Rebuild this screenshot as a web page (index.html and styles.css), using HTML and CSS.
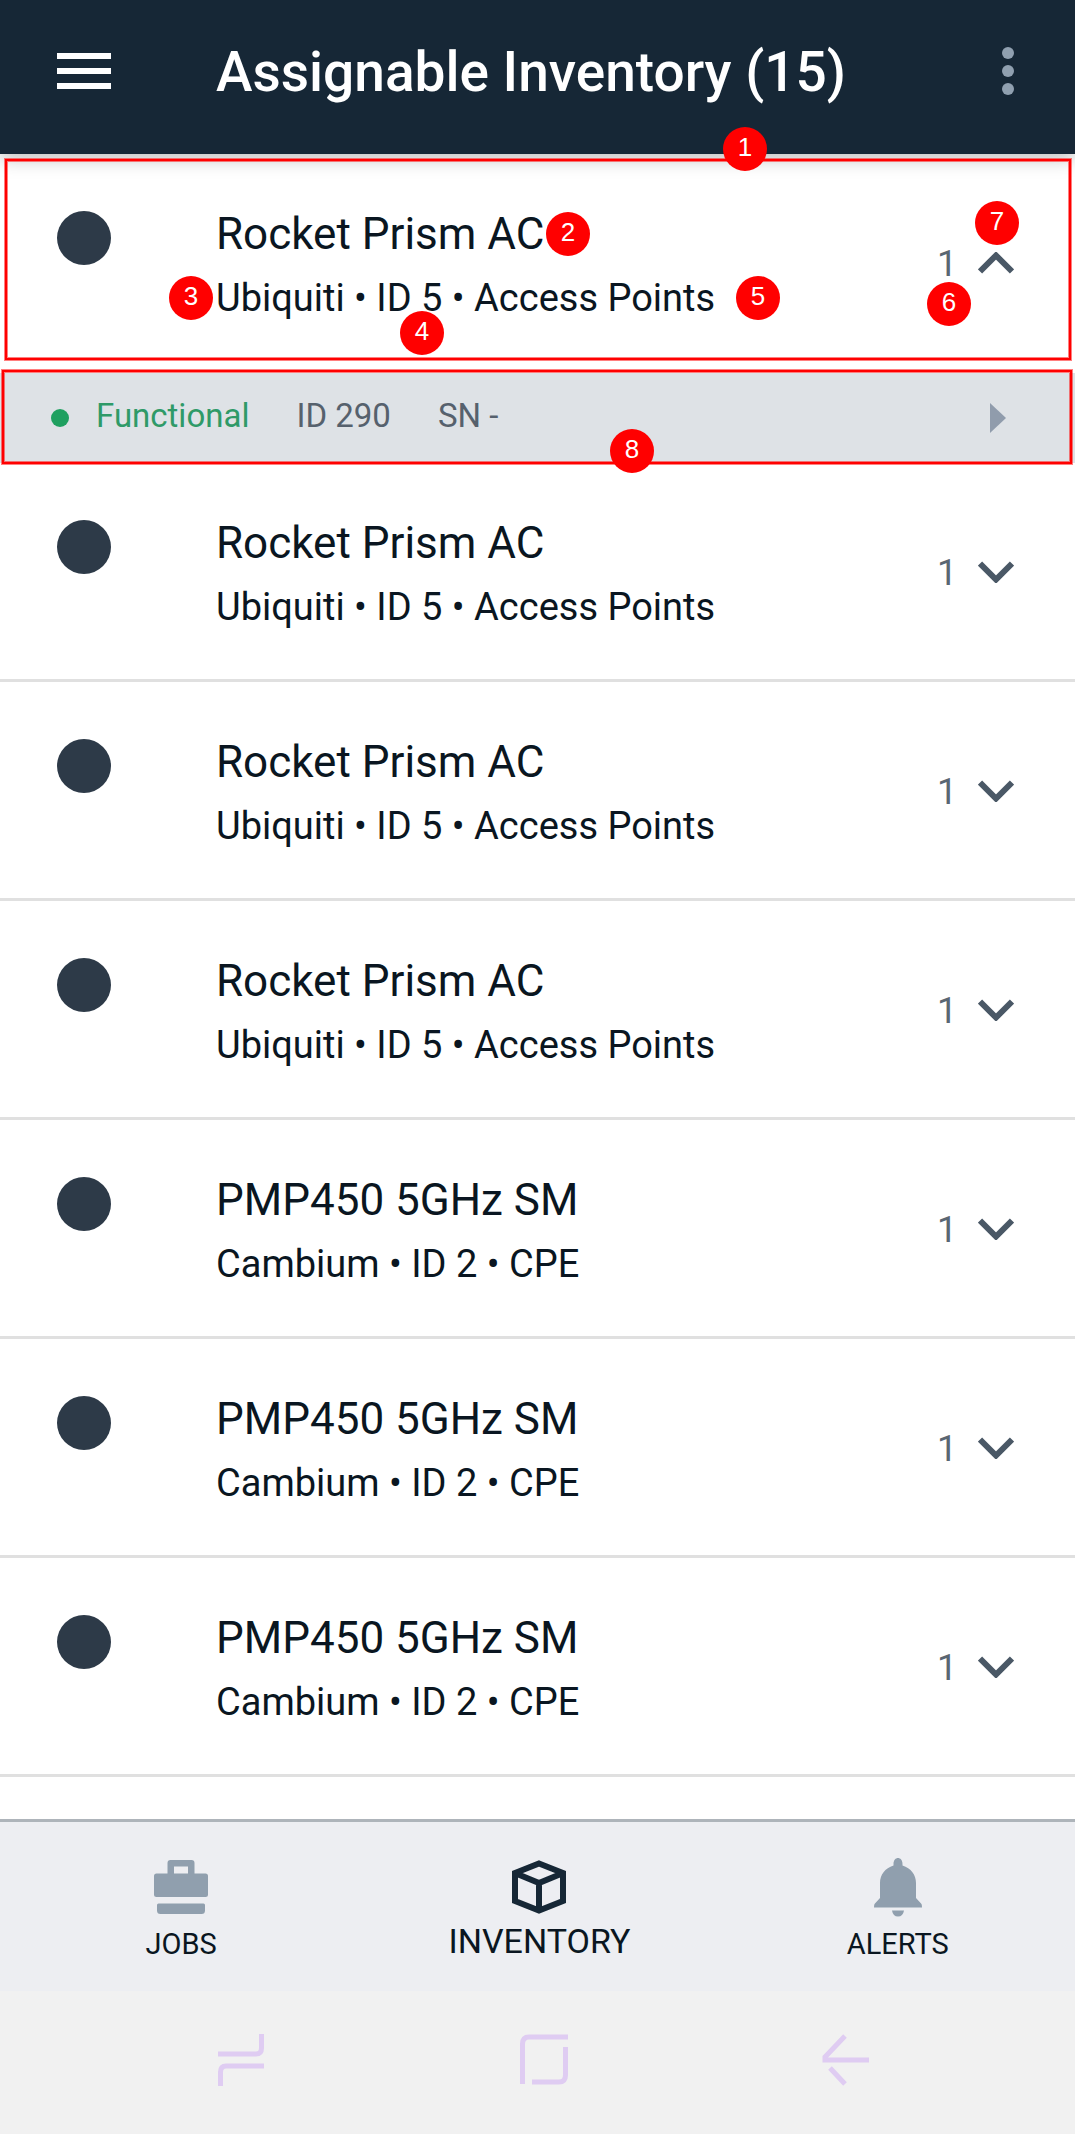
FILE: index.html
```html
<!DOCTYPE html>
<html lang="en">
<head>
<meta charset="utf-8">
<meta name="viewport" content="width=device-width, initial-scale=1">
<title>Assignable Inventory</title>
<link rel="stylesheet" href="styles.css">
</head>
<body>
<svg class="defs" aria-hidden="true">
  <symbol id="chevron" viewBox="0 0 36 22"><path d="M2 2.500 18 18.500 34 2.500" fill="none" stroke="currentColor" stroke-width="6"/></symbol>
</svg>
<div class="app">
  <header class="topbar">
    <button class="menu" type="button" aria-label="Menu">
      <svg width="54" height="38" viewBox="0 0 54 38"><path d="M0 0h54v6H0zM0 15h54v6H0zM0 30h54v6H0z" fill="#fff"/></svg>
    </button>
    <h1 class="topbar-title">Assignable Inventory (15)</h1>
    <button class="more" type="button" aria-label="More options">
      <svg width="12" height="50" viewBox="0 0 12 50"><g fill="#90a0b0"><circle cx="6" cy="6" r="6"/><circle cx="6" cy="24" r="6"/><circle cx="6" cy="42" r="6"/></g></svg>
    </button>
  </header>

  <main class="list">
    <section class="group">
      <button class="row" type="button" aria-expanded="true">
        <span class="dot"></span>
        <span class="text"><span class="name">Rocket Prism AC</span><span class="meta">Ubiquiti • ID 5 • Access Points</span></span>
        <span class="count">1</span>
        <svg class="chevron up"><use href="#chevron"/></svg>
      </button>
      <span class="frame frame-row"></span>
      <span class="badge b1">1</span>
      <span class="badge b2">2</span>
      <span class="badge b3">3</span>
      <span class="badge b4">4</span>
      <span class="badge b5">5</span>
      <span class="badge b6">6</span>
      <span class="badge b7">7</span>
    </section>
    <section class="group">
      <a class="unit" href="#unit-290">
        <span class="status-dot"></span>
        <span class="field status">Functional</span>
        <span class="field">ID 290</span>
        <span class="field">SN -</span>
        <svg class="caret" width="16" height="30" viewBox="0 0 16 30"><path d="M0 0 16 15 0 30z" fill="#909cac"/></svg>
      </a>
      <span class="frame frame-unit"></span>
      <span class="badge b8">8</span>
    </section>
    <button class="row divided" type="button" aria-expanded="false">
      <span class="dot"></span>
      <span class="text"><span class="name">Rocket Prism AC</span><span class="meta">Ubiquiti • ID 5 • Access Points</span></span>
      <span class="count">1</span>
      <svg class="chevron"><use href="#chevron"/></svg>
    </button>
    <button class="row divided" type="button" aria-expanded="false">
      <span class="dot"></span>
      <span class="text"><span class="name">Rocket Prism AC</span><span class="meta">Ubiquiti • ID 5 • Access Points</span></span>
      <span class="count">1</span>
      <svg class="chevron"><use href="#chevron"/></svg>
    </button>
    <button class="row divided" type="button" aria-expanded="false">
      <span class="dot"></span>
      <span class="text"><span class="name">Rocket Prism AC</span><span class="meta">Ubiquiti • ID 5 • Access Points</span></span>
      <span class="count">1</span>
      <svg class="chevron"><use href="#chevron"/></svg>
    </button>
    <button class="row divided" type="button" aria-expanded="false">
      <span class="dot"></span>
      <span class="text"><span class="name">PMP450 5GHz SM</span><span class="meta">Cambium • ID 2 • CPE</span></span>
      <span class="count">1</span>
      <svg class="chevron"><use href="#chevron"/></svg>
    </button>
    <button class="row divided" type="button" aria-expanded="false">
      <span class="dot"></span>
      <span class="text"><span class="name">PMP450 5GHz SM</span><span class="meta">Cambium • ID 2 • CPE</span></span>
      <span class="count">1</span>
      <svg class="chevron"><use href="#chevron"/></svg>
    </button>
    <button class="row divided" type="button" aria-expanded="false">
      <span class="dot"></span>
      <span class="text"><span class="name">PMP450 5GHz SM</span><span class="meta">Cambium • ID 2 • CPE</span></span>
      <span class="count">1</span>
      <svg class="chevron"><use href="#chevron"/></svg>
    </button>
  </main>

  <nav class="tabs" aria-label="Main">
    <a class="tab" href="#jobs">
      <svg width="54" height="60" viewBox="0 0 54 60"><path fill="#909fae" fill-rule="evenodd" d="M0 16q0-2.500 2.500-2.500H13.500V3Q13.500 0 16.500 0H37.500Q40.500 0 40.500 3V13.500H51.500Q54 13.500 54 16V34.500Q54 37 51.500 37H2.500Q0 37 0 34.500zM20 6.500V13.500H34V6.500zM4.500 43.500H49.500Q51 43.500 51 45V50.500Q51 54 47.500 54H6.500Q3 54 3 50.500V45Q3 43.500 4.500 43.500z"/></svg>
      <span class="tab-label">JOBS</span>
    </a>
    <a class="tab active" href="#inventory" aria-current="page">
      <svg width="54" height="60" viewBox="0 0 54 60"><path fill="none" stroke="#162736" stroke-width="6" d="M27 3.500 51 13V41L27 50.500 3 41V13zM4 13.500 27 23 50 13.500M27 23V50"/></svg>
      <span class="tab-label">INVENTORY</span>
    </a>
    <a class="tab" href="#alerts">
      <svg width="54" height="60" viewBox="0 0 54 60"><path fill="#909fae" transform="translate(0 -1)" d="M22.500 5C22.500-3 31.500-3 31.500 5V6.500C40 9 45 16 45 24V39L50.500 45Q51 46 51 48.500H3Q3 46 3.500 45L9 39V24C9 16 14 9 22.500 6.500zM21 51.500H33Q32 57.500 27 57.500T21 51.500z"/></svg>
      <span class="tab-label">ALERTS</span>
    </a>
  </nav>

  <footer class="system">
    <button type="button" aria-label="Recent apps">
      <svg width="46" height="52" viewBox="0 0 46 52"><path d="M0 20H38Q43.500 20 43.500 14V0M46 32H8Q2.500 32 2.500 38V52"/></svg>
    </button>
    <button type="button" aria-label="Home">
      <svg width="48" height="52" viewBox="0 0 48 52"><path d="M2.500 50V10Q2.500 3 9 3H48M45.500 13V41Q45.500 48 39 48H12"/></svg>
    </button>
    <button type="button" aria-label="Back">
      <svg width="46" height="52" viewBox="0 0 46 52"><path d="M22 2 2 23V26H46M7 34 22 50"/></svg>
    </button>
  </footer>
</div>
</body>
</html>
```
FILE: styles.css
```css
* { box-sizing: border-box; }

body {
  margin: 0;
  background: #fff;
  color: #0a1621;
  font-family: Roboto, sans-serif;
}

button {
  margin: 0;
  padding: 0;
  border: 0;
  background: none;
  color: inherit;
  font: inherit;
  text-align: left;
}

a { color: inherit; text-decoration: none; }
svg { display: block; overflow: visible; }
.defs { display: none; }

.app {
  display: flex;
  flex-direction: column;
  min-height: 100vh;
}

/* Top bar */
.topbar {
  position: relative;
  z-index: 1;
  display: flex;
  align-items: center;
  padding: 30px 61px 40px 57px;
  background: #162736;
  color: #fff;
  box-shadow: 0 4px 18px rgba(0, 0, 0, 0.28);
}

.menu { width: 159px; }

.topbar-title {
  flex: 1;
  margin: 0;
  font-size: 55px;
  font-weight: 500;
  line-height: 84px;
}

/* Inventory list */
.list { flex: 1; background: #fff; }

.group {
  position: relative;
  z-index: 2;
}

.row {
  display: flex;
  width: 100%;
  height: 219px;
  padding: 50px 61px 0 57px;
}

.divided { border-bottom: 3px solid #e0e0e0; }

.dot {
  width: 54px;
  height: 54px;
  margin: 7px 105px 0 0;
  border-radius: 50%;
  background: #2d3a48;
}

.text { flex: 1; }
.name, .meta { display: block; }
.name { font-size: 44px; line-height: 60px; }
.meta { font-size: 38px; line-height: 68px; }

.count {
  width: 41px;
  padding-top: 33px;
  color: #5a6672;
  font-size: 36px;
  line-height: 54px;
}

.chevron {
  width: 36px;
  height: 22px;
  margin-top: 48px;
  color: #4a5866;
}

.up { transform: rotate(180deg); }

.unit {
  display: flex;
  align-items: center;
  height: 90px;
  padding: 0 69px 0 51px;
  background: #dee2e6;
  color: #56616d;
  font-size: 33px;
  line-height: 40px;
}

.status-dot {
  width: 18px;
  height: 18px;
  margin-right: 27px;
  border-radius: 50%;
  background: #1fa060;
}

.field { padding: 0 47px 4px 0; }
.status { color: #2f9a68; }
.caret { margin-left: auto; }

/* Numbered callouts */
.frame {
  position: absolute;
  border: 2px solid #f00;
  box-shadow: 0 0 0 1px rgba(255, 0, 0, 0.5), inset 0 0 0 1px rgba(255, 0, 0, 0.5);
  pointer-events: none;
}

.frame-row { top: 5px; right: 4px; bottom: 13px; left: 5px; }
.frame-unit { top: -3px; right: 3px; bottom: -1px; left: 2px; }

.badge {
  position: absolute;
  width: 44px;
  height: 44px;
  border-radius: 50%;
  background: #f00;
  color: #fff;
  font-family: "Liberation Sans", Arial, sans-serif;
  font-size: 26px;
  line-height: 40px;
  text-align: center;
}

.b1 { top: -27px; left: 723px; }
.b2 { top: 58px; left: 546px; }
.b3 { top: 122px; left: 169px; }
.b4 { top: 157px; left: 400px; }
.b5 { top: 122px; left: 736px; }
.b6 { top: 128px; right: 104px; }
.b7 { top: 47px; right: 56px; }
.b8 { top: 56px; left: 610px; }

/* Bottom tabs */
.tabs {
  display: flex;
  gap: 4px;
  height: 172px;
  padding-left: 4px;
  border-top: 3px solid #aeb4ba;
  background: #edeef2;
}

.tab {
  display: flex;
  flex: 1;
  flex-direction: column;
  align-items: center;
  padding-top: 38px;
}

.tab-label { font-size: 29px; line-height: 48px; }
.active .tab-label { font-size: 34px; line-height: 42px; }

/* System navigation */
.system {
  display: flex;
  align-items: flex-start;
  justify-content: space-between;
  height: 143px;
  padding: 43px 206px 0 218px;
  background: #f1f1f1;
  fill: none;
  stroke: #dfccf2;
  stroke-width: 5px;
}
```
